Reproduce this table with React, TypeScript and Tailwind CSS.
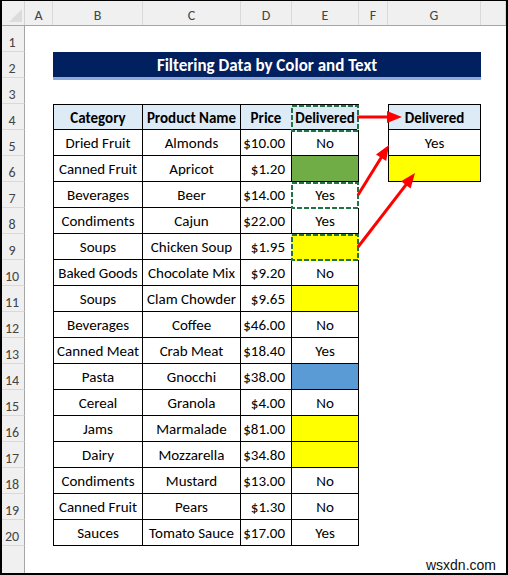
import React from "react";

const rows: [string, string, string, string][] = [
  ["Dried Fruit", "Almonds", "$10.00", "No"],
  ["Canned Fruit", "Apricot", "$1.20", "green"],
  ["Beverages", "Beer", "$14.00", "Yes"],
  ["Condiments", "Cajun", "$22.00", "Yes"],
  ["Soups", "Chicken Soup", "$1.95", "yellow"],
  ["Baked Goods", "Chocolate Mix", "$9.20", "No"],
  ["Soups", "Clam Chowder", "$9.65", "yellow"],
  ["Beverages", "Coffee", "$46.00", "No"],
  ["Canned Meat", "Crab Meat", "$18.40", "Yes"],
  ["Pasta", "Gnocchi", "$38.00", "blue"],
  ["Cereal", "Granola", "$4.00", "No"],
  ["Jams", "Marmalade", "$81.00", "yellow"],
  ["Dairy", "Mozzarella", "$34.80", "yellow"],
  ["Condiments", "Mustard", "$13.00", "No"],
  ["Canned Fruit", "Pears", "$1.30", "No"],
  ["Sauces", "Tomato Sauce", "$17.00", "Yes"],
];

const fillClass: Record<string, string> = {
  green: "bg-[#70ad47]",
  yellow: "bg-[#ffff00]",
  blue: "bg-[#5b9bd5]",
};

function RowHead({ n }: { n?: number }) {
  return (
    <div className="w-[23px] shrink-0 self-stretch bg-[#f0f0f0] border-r border-b border-r-[#a6a6a6] border-b-[#d9d9d9] flex items-center justify-center pt-[8px] pr-[2px] text-[14px] leading-none text-[#444]">
      {n ?? ""}
    </div>
  );
}

function Dashed({ bg }: { bg: string }) {
  return (
    <svg className="absolute left-[-1px] top-[0px] pointer-events-none" width={68} height={27}>
      <rect x={1} y={1} width={66} height={25} fill="none" stroke={bg} strokeWidth={2} />
      <rect x={1} y={1} width={66} height={25} fill="none" stroke="#217346" strokeWidth={2} strokeDasharray="5 2" />
    </svg>
  );
}

function Arrow({ x1, y1, x2, y2 }: { x1: number; y1: number; x2: number; y2: number }) {
  const dx = x2 - x1;
  const dy = y2 - y1;
  const len = Math.sqrt(dx * dx + dy * dy);
  const ux = dx / len;
  const uy = dy / len;
  const hl = 15;
  const hw = 6;
  const bx = x2 - ux * hl;
  const by = y2 - uy * hl;
  const px = -uy;
  const py = ux;
  return (
    <g>
      <line x1={x1} y1={y1} x2={bx + ux * 2} y2={by + uy * 2} stroke="#ff0000" strokeWidth={3} />
      <polygon
        points={`${x2},${y2} ${bx + px * hw},${by + py * hw} ${bx - px * hw},${by - py * hw}`}
        fill="#ff0000"
      />
    </g>
  );
}

export default function App() {
  const font = "font-['Carlito','Calibri','Lato',sans-serif]";
  const cols = ["A", "B", "C", "D", "E", "F", "G", ""];
  const widths = ["w-[28px]", "w-[90px]", "w-[98px]", "w-[51px]", "w-[67px]", "w-[29px]", "w-[93px]", "w-[25px]"];
  const cell = "flex items-center justify-center pt-[2px] text-[15px] leading-none text-black";

  return (
    <div className={`relative w-[508px] h-[575px] bg-white border-l-2 border-r-2 border-t border-b-2 border-black overflow-hidden flex flex-col ${font}`}>
      {/* column headers */}
      <div className="flex h-[25px] shrink-0 bg-[#f0f0f0] border-b border-[#a6a6a6]">
        <div className="w-[23px] shrink-0 border-r border-[#d4d4d4] relative">
          <svg className="absolute left-[7px] top-[8px]" width={14} height={14}>
            <polygon points="13,0 13,13 0,13" fill="#dcdcdc" />
          </svg>
        </div>
        {cols.map((c, i) => (
          <div
            key={i}
            className={`${widths[i]} shrink-0 border-r border-[#d9d9d9] flex items-center justify-center pt-[5px] text-[14px] leading-none text-[#444]`}
          >
            {c}
          </div>
        ))}
      </div>

      {/* row 1 */}
      <div className="flex h-[26px] shrink-0">
        <RowHead n={1} />
      </div>

      {/* row 2 title */}
      <div className="flex h-[26px] shrink-0">
        <RowHead n={2} />
        <div className="w-[28px] shrink-0" />
        <div className="w-[428px] shrink-0 h-[28px] bg-[#002060] border-b-[3px] border-[#8ea9db] flex items-center justify-center pt-[2px] text-white font-bold text-[17px] leading-none">
          Filtering Data by Color and Text
        </div>
      </div>

      {/* row 3 */}
      <div className="flex h-[26px] shrink-0">
        <RowHead n={3} />
      </div>

      {/* row 4 headers */}
      <div className="flex h-[26px] shrink-0">
        <RowHead n={4} />
        <div className="w-[28px] shrink-0" />
        <div className={`w-[90px] shrink-0 border border-black bg-[#ddebf7] font-bold ${cell}`}>Category</div>
        <div className={`w-[98px] shrink-0 border-r border-t border-b border-black bg-[#ddebf7] font-bold ${cell}`}>Product Name</div>
        <div className={`w-[51px] shrink-0 border-r border-t border-b border-black bg-[#ddebf7] font-bold ${cell}`}>Price</div>
        <div className={`relative w-[67px] shrink-0 border-r border-t border-b border-black bg-[#ddebf7] font-bold ${cell}`}>
          Delivered
          <Dashed bg="#ddebf7" />
        </div>
        <div className="w-[29px] shrink-0" />
        <div className={`w-[93px] shrink-0 border border-black bg-[#ddebf7] font-bold ${cell}`}>Delivered</div>
      </div>

      {rows.map((r, idx) => {
        const n = idx + 5;
        const d = r[3];
        const isFill = d in fillClass;
        return (
          <div key={n} className="flex h-[26px] shrink-0">
            <RowHead n={n} />
            <div className="w-[28px] shrink-0" />
            <div className={`w-[90px] shrink-0 border-l border-r border-b border-black ${cell}`}>{r[0]}</div>
            <div className={`w-[98px] shrink-0 border-r border-b border-black ${cell}`}>{r[1]}</div>
            <div className="w-[51px] shrink-0 border-r border-b border-black flex items-center justify-end pt-[2px] pr-[6px] text-[15px] leading-none text-black">
              {r[2]}
            </div>
            <div className={`relative w-[67px] shrink-0 border-r border-b border-black ${isFill ? fillClass[d] : ""} ${cell}`}>
              {isFill ? "" : d}
              {n === 7 && <Dashed bg="#ffffff" />}
              {n === 9 && <Dashed bg="#ffff00" />}
            </div>
            <div className="w-[29px] shrink-0" />
            {n === 5 && (
              <div className={`w-[93px] shrink-0 border-l border-r border-b border-black ${cell}`}>Yes</div>
            )}
            {n === 6 && (
              <div className="w-[93px] shrink-0 border-l border-r border-b border-black bg-[#ffff00]" />
            )}
          </div>
        );
      })}

      {/* filler */}
      <div className="flex flex-1">
        <div className="w-[23px] shrink-0 bg-[#f0f0f0] border-r border-[#a6a6a6]" />
      </div>

      {/* arrows */}
      <svg className="absolute left-[-2px] top-[-1px] pointer-events-none" width={508} height={575}>
        <Arrow x1={357} y1={117} x2={402} y2={117} />
        <Arrow x1={358} y1={195} x2={389} y2={145} />
        <Arrow x1={358} y1={247} x2={415} y2={173} />
      </svg>

      <div className="absolute right-[10px] bottom-[1px] font-['Liberation_Sans'] text-[14px] leading-none text-[#111]">
        wsxdn.com
      </div>
    </div>
  );
}
